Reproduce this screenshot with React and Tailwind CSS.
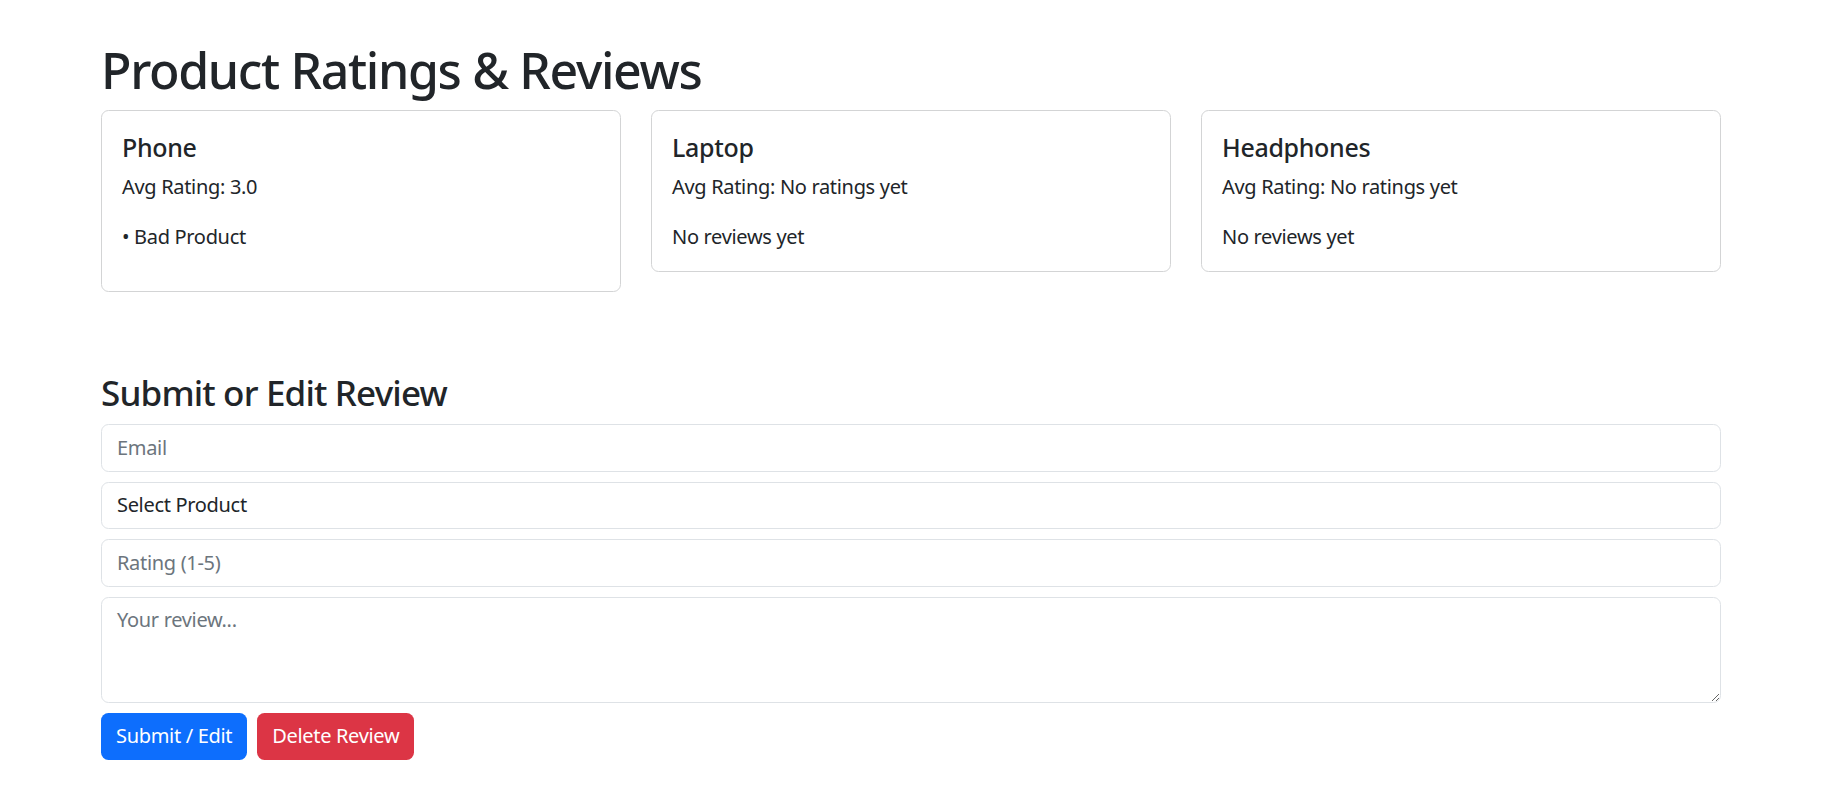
import { useState } from 'react';

const products = [
  { name: 'Phone', avg: '3.0', reviews: ['Bad Product'] },
  { name: 'Laptop', avg: null, reviews: [] },
  { name: 'Headphones', avg: null, reviews: [] },
];

function ProductCard({ product }) {
  return (
    <div className="rounded-[7.5px] border border-[#d3d4d5] bg-white">
      <div className="px-[20px] pt-[21px] pb-[19px]">
        <h5 className="mb-[10px] text-[25px] leading-[30px] font-medium">{product.name}</h5>
        <p className="mb-[20px] text-[20px] leading-[30px]">
          Avg Rating: {product.avg ?? 'No ratings yet'}
        </p>
        {product.reviews.length > 0 ? (
          <ul className="mb-[20px] text-[20px] leading-[30px]">
            {product.reviews.map((r, i) => (
              <li key={i}>• {r}</li>
            ))}
          </ul>
        ) : (
          <p className="text-[20px] leading-[30px]">No reviews yet</p>
        )}
      </div>
    </div>
  );
}

export default function App() {
  const [email, setEmail] = useState('');
  const [product, setProduct] = useState('');
  const [rating, setRating] = useState('');
  const [review, setReview] = useState('');

  const inputCls =
    'block w-full h-[47.5px] px-[15px] text-[20px] leading-[30px] text-[#212529] bg-white border border-[#dee2e6] rounded-[7.5px] placeholder:text-[#6c757d] outline-none';

  return (
    <div className="min-h-screen bg-white text-[#212529] tracking-[-0.02em] font-['Segoe_UI','Noto_Sans',sans-serif]">
      <div className="pl-[101px] pr-[116px] pt-[40px] pb-[40px]">
        <h1 className="mb-[10px] text-[50px] leading-[60px] font-medium tracking-[-0.027em]">Product Ratings &amp; Reviews</h1>

        <div className="grid grid-cols-3 gap-[30px] items-start">
          {products.map((p) => (
            <ProductCard key={p.name} product={p} />
          ))}
        </div>

        <h3 className="mt-[80px] mb-[10px] text-[35px] leading-[42px] font-medium tracking-[-0.024em]">Submit or Edit Review</h3>

        <form onSubmit={(e) => e.preventDefault()}>
          <input
            type="email"
            className={`${inputCls} mb-[10px]`}
            placeholder="Email"
            value={email}
            onChange={(e) => setEmail(e.target.value)}
          />
          <select
            className={`${inputCls} mb-[10px] appearance-none`}
            value={product}
            onChange={(e) => setProduct(e.target.value)}
          >
            <option value="">Select Product</option>
            {products.map((p) => (
              <option key={p.name} value={p.name}>{p.name}</option>
            ))}
          </select>
          <input
            type="number"
            className={`${inputCls} mb-[10px] appearance-none [-moz-appearance:textfield]`}
            placeholder="Rating (1-5)"
            value={rating}
            onChange={(e) => setRating(e.target.value)}
          />
          <textarea
            rows={3}
            className="block w-full h-[106px] mb-[10px] px-[15px] py-[7.5px] text-[20px] leading-[30px] text-[#212529] bg-white border border-[#dee2e6] rounded-[7.5px] placeholder:text-[#6c757d] outline-none"
            placeholder="Your review..."
            value={review}
            onChange={(e) => setReview(e.target.value)}
          />
          <div className="flex gap-[10px]">
            <button type="submit" className="h-[47px] px-[15px] text-[20px] leading-[30px] text-white bg-[#0d6efd] rounded-[7.5px]">
              Submit / Edit
            </button>
            <button type="button" className="h-[47px] px-[15px] text-[20px] leading-[30px] text-white bg-[#dc3545] rounded-[7.5px]">
              Delete Review
            </button>
          </div>
        </form>
      </div>
    </div>
  );
}
